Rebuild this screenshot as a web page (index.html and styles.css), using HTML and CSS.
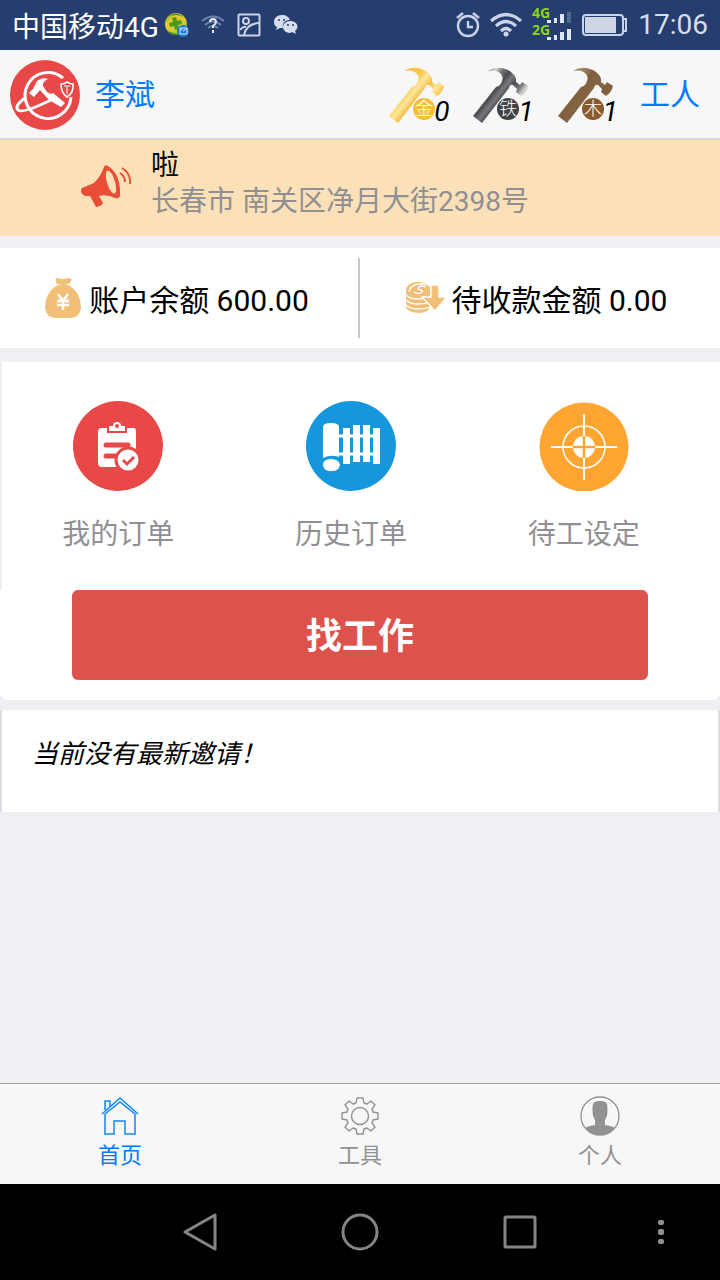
FILE: index.html
```html
<!DOCTYPE html>
<html lang="zh-CN">
<head>
<meta charset="utf-8">
<meta name="viewport" content="width=device-width, initial-scale=1">
<title>首页</title>
<link rel="stylesheet" href="styles.css">
</head>
<body>
<div class="status">
  <div class="status-left">
    <span class="carrier">中国移动4G</span>
    <svg width="28" height="26" viewBox="0 0 28 26"><defs><linearGradient id="ball" x2="1" y2="1"><stop offset="0" stop-color="#58b82c"/><stop offset=".3" stop-color="#e6c931"/><stop offset=".65" stop-color="#d2cb34"/><stop offset="1" stop-color="#2b8a2c"/></linearGradient></defs><circle cx="12" cy="12" r="11" fill="url(#ball)"/><path d="M4 5Q12-2 20 5Q12 1 4 5ZM3 18Q9 25 15 22Q7 21 3 18Z" fill="#348f24"/><path d="M8 6l4-1 1 4 4-1 1 4-4 1 1 4-4 1-1-4-4 1-1-4 4-1z" fill="#4a9a1e"/><circle cx="19" cy="19" r="6" fill="#1979cf"/><path d="M16 16h7v6h-7zM16 16l3.500 3L23 16" fill="none" stroke="#d9ecff"/></svg>
    <svg width="24" height="20" viewBox="0 0 24 20"><g fill="none" stroke="#7083ad" stroke-width="2"><path d="M1 6Q12-3 23 6M4 10Q12 3 20 10M7 13Q12 9 17 13"/></g><path d="M9 7q0-3 3-3t3 3q0 2-3 4v2M12 15v3" fill="none" stroke="#e4eaf6" stroke-width="2"/></svg>
    <svg width="24" height="24" viewBox="0 0 24 24" fill="none" stroke="#c9d4e8" stroke-width="2"><rect x="1.500" y="1.500" width="21" height="21" rx="1"/><circle cx="9" cy="8" r="3"/><path d="M7 22Q9 11 22 10M3 17q3-4 6-3"/></svg>
    <svg width="26" height="22" viewBox="0 0 26 22"><path d="M9 1C4 1 1 4 1 8c0 3 1 4 3 5l-1 3 4-2h3C9 9 12 6 17 6 16 3 13 1 9 1Z" fill="#d5deee"/><path d="M17 7c-4 0-7 3-7 6s3 6 7 6l2-1 4 2-1-3c5-4 2-10-5-10Z" fill="#d5deee"/><g fill="#263d6f"><circle cx="6" cy="6" r="1"/><circle cx="11" cy="6" r="1"/><circle cx="15" cy="11" r="1"/><circle cx="20" cy="11" r="1"/></g></svg>
  </div>
  <div class="status-right">
    <svg width="24" height="26" viewBox="0 0 24 26" fill="none" stroke="#c9d4e8" stroke-width="2.400"><circle cx="12" cy="14" r="10"/><path d="M12 9v6h5M1 6l6-5M23 6l-6-5"/></svg>
    <svg width="32" height="26" viewBox="0 0 32 26"><g fill="none" stroke="#c9d4e8" stroke-width="3.200"><path d="M1 9Q16-4 31 9M6 14Q16 5 26 14M11 19Q16 14 21 19"/></g><circle cx="16" cy="22" r="2.500" fill="#c9d4e8"/></svg>
    <svg width="40" height="46" viewBox="0 -4 40 46"><g class="net"><text x="0" y="12">4G</text><text x="0" y="29">2G</text></g><g fill="#dfe6f2"><rect x="15" y="14" width="4" height="3"/><rect x="22" y="12" width="3" height="5"/><rect x="28" y="8" width="4" height="9"/><rect x="35" y="6" width="4" height="11" fill="#53668f"/><rect x="15" y="31" width="4" height="3"/><rect x="22" y="29" width="3" height="5"/><rect x="28" y="26" width="4" height="8"/><rect x="35" y="23" width="4" height="11"/></g></svg>
    <svg width="46" height="24" viewBox="0 0 46 24"><rect x="1" y="2" width="40" height="20" rx="3" fill="none" stroke="#c9d4e8" stroke-width="2"/><rect x="3" y="4" width="31" height="16" fill="#cdd5e2"/><path d="M42 6h2v12h-2" fill="none" stroke="#c9d4e8" stroke-width="2"/></svg>
    <time class="clock">17:06</time>
  </div>
</div>

<header class="top">
  <svg width="70" height="70" viewBox="0 0 70 70"><circle cx="35" cy="35" r="35" fill="#e84848"/><g fill="none" stroke="#fff" stroke-width="3"><path d="M53 18A23 23 0 1 0 61 37"/><path d="M15 38Q4 46 8 50Q12 54 41 40"/><path d="M51 24q4 0 6-2q3 2 6 2q1 9-6 13q-6-4-6-13Z" stroke-width="1.600" fill="#e84848"/><path d="M54 26h6M57 26v8" stroke-width="1"/></g><path d="M24 37L19 33L23 29L27 21Q32 17 38 19Q32 22 33 26L37 32L41 34L43 33L55 43L51 47L39 40L30 30Z" fill="#fff"/></svg>
  <a class="name" href="#me">李斌</a>
  <div class="medals">
    <div class="medal"><svg width="58" height="58" viewBox="0 0 58 58"><defs><linearGradient id="gold" gradientUnits="userSpaceOnUse" x1="13" y1="8" x2="35" y2="26" spreadMethod="reflect"><stop offset="0" stop-color="#f7bd3d"/><stop offset=".5" stop-color="#f9c64b"/><stop offset=".75" stop-color="#fde79c"/><stop offset="1" stop-color="#f5bd42"/></linearGradient></defs><path d="M16 5Q25-1 36 4Q45 9 44 16L48 19L50 16L56 20Q55 26 49 30L44 26L45 23L41 19Q38 18 37 22L10 57L1 50L24 21L27 20Q33 13 29 8Q25 3 16 5Z" fill="url(#gold)"/><circle cx="36" cy="43" r="11" fill="#f5bd3c"/><text class="metal" x="36" y="49">金</text></svg><em>0</em></div>
    <div class="medal"><svg width="58" height="58" viewBox="0 0 58 58"><defs><linearGradient id="iron" gradientUnits="userSpaceOnUse" x1="20" y1="8" x2="34" y2="19" spreadMethod="reflect"><stop offset="0" stop-color="#d8d8d8"/><stop offset=".3" stop-color="#77797c"/><stop offset=".7" stop-color="#4c4d50"/><stop offset="1" stop-color="#77797c"/></linearGradient></defs><path d="M16 5Q25-1 36 4Q45 9 44 16L48 19L50 16L56 20Q55 26 49 30L44 26L45 23L41 19Q38 18 37 22L10 57L1 50L24 21L27 20Q33 13 29 8Q25 3 16 5Z" fill="url(#iron)"/><circle cx="36" cy="43" r="11" fill="#414347"/><text class="metal" x="36" y="49">铁</text></svg><em>1</em></div>
    <div class="medal"><svg width="58" height="58" viewBox="0 0 58 58"><defs><linearGradient id="wood" gradientUnits="userSpaceOnUse" x1="20" y1="8" x2="38" y2="22" spreadMethod="reflect"><stop offset="0" stop-color="#a98f6d"/><stop offset=".5" stop-color="#80603b"/><stop offset="1" stop-color="#856545"/></linearGradient></defs><path d="M16 5Q25-1 36 4Q45 9 44 16L48 19L50 16L56 20Q55 26 49 30L44 26L45 23L41 19Q38 18 37 22L10 57L1 50L24 21L27 20Q33 13 29 8Q25 3 16 5Z" fill="url(#wood)"/><circle cx="36" cy="43" r="11" fill="#8a5a2c"/><text class="metal" x="36" y="49">木</text></svg><em>1</em></div>
  </div>
  <a class="role" href="#role">工人</a>
</header>

<main class="content">
  <section class="notice">
    <svg width="52" height="44" viewBox="0 0 52 44"><g fill="#e94d35"><path d="M2 24L14 19Q21 12 24 3Q25 0 28 2Q41 10 40 32Q39 35 35 34Q27 30 19 32L23 39Q22 42 16 43L10 32L5 32Q-1 29 2 24Z"/></g><ellipse cx="31" cy="18" rx="4" ry="12" transform="rotate(-17 31 18)" fill="#fce1b8"/><path d="M40 9Q45 12 45 18M42 4Q51 9 50 20" fill="none" stroke="#e94d35" stroke-width="2"/></svg>
    <div>
      <div class="notice-title">啦</div>
      <div class="notice-address">长春市 南关区净月大街2398号</div>
    </div>
  </section>

  <section class="money">
    <div class="money-cell">
      <svg width="36" height="42" viewBox="0 0 36 42"><path d="M12 7Q9 1 12 1L18 2L24 1Q29 1 24 7ZM11 9Q18 5 25 9Q36 16 36 31Q35 41 24 41H12Q1 41 0 31Q0 16 11 9Z" fill="#f2bf79"/><path d="M13 17l5 7 5-7M18 24v9M12 24h12M12 28h12" fill="none" stroke="#fff" stroke-width="2.400"/></svg>
      <span>账户余额 600.00</span>
    </div>
    <div class="money-cell pending">
      <svg width="42" height="34" viewBox="0 0 42 34"><path d="M1 9C1 4 7 1 13 1s12 2 12 6v18c0 4-5 7-11 7S1 29 1 26Z" fill="#f2bf79"/><g fill="none" stroke="#fff" stroke-width="1.300"><path d="M0 13q4 5 12 5t12-2M0 18q4 5 12 5t14-2M0 23q4 5 12 5t14-2M4 11Q5 4 14 3Q21 2 25 5M9 11q5 3 8 0q1-2-2-2q-3-1-1-3q3-2 7 0"/></g><path d="M26 4h8v12h8L30 30L17 16h9z" fill="#f2bf79" stroke="#fff" stroke-width="1.300"/></svg>
      <span>待收款金额 0.00</span>
    </div>
  </section>

  <section class="work">
    <nav class="menu">
      <a href="#orders"><svg width="90" height="90" viewBox="0 0 90 90"><circle cx="45" cy="45" r="45" fill="#e84848"/><path d="M29 27h32q2 0 2 4v31q0 4-4 4H29q-4 0-4-4V31q0-4 4-4Z" fill="#fff"/><path d="M34 25h20v7H34z" fill="#e84848"/><path d="M36 30v-5h4q0-4 4-4t4 4h4v5Z" fill="#fff"/><circle cx="44" cy="25" r="2" fill="#e84848"/><path d="M33 44h22M33 55h14" stroke="#e84848" stroke-width="5" stroke-linecap="round"/><circle cx="55" cy="59" r="12" fill="#fff" stroke="#e84848" stroke-width="3"/><path d="M50 59l4 4 7-7" fill="none" stroke="#e84848" stroke-width="3"/></svg><span>我的订单</span></a>
      <a href="#history"><svg width="90" height="90" viewBox="0 0 90 90"><circle cx="45" cy="45" r="45" fill="#1697dd"/><g fill="#fff"><path d="M17 26Q17 22 25 22T33 26V56Q25 53 17 57ZM17 63Q18 58 25 58Q33 58 34 64Q33 70 26 70H23Q17 69 17 63Z"/><path d="M37 27h7v36h-7zM47 24h7v37h-7zM57 24h7v37h-7zM67 27h7v36h-7z"/></g><path d="M33 35h40M33 53h40" stroke="#fff" stroke-width="3"/></svg><span>历史订单</span></a>
      <a href="#standby"><svg width="90" height="90" viewBox="0 0 90 90"><circle cx="45" cy="46" r="44.500" fill="#ffa632"/><circle cx="45" cy="46" r="21" fill="none" stroke="#fff" stroke-width="1.500"/><circle cx="45" cy="46" r="11" fill="#fff"/><path d="M34 46h22M45 35v22" stroke="#ffa632" stroke-width="2.500"/><path d="M12 46h22M56 46h22M45 13v22M45 57v22" stroke="#fff" stroke-width="2"/></svg><span>待工设定</span></a>
    </nav>
    <button class="find" type="button">找工作</button>
  </section>

  <section class="invite"><em>当前没有最新邀请！</em></section>
</main>

<nav class="tabs">
  <a class="active" href="#home"><svg width="40" height="40" viewBox="0 0 40 40" fill="none" stroke="#1485f5" stroke-width="1.500"><path d="M2 18L20 2L38 18M5 14V5h5v5M5 18V38H14V25H25V38H35V18L20 6Z"/></svg><span>首页</span></a>
  <a href="#tools"><svg width="40" height="40" viewBox="0 0 40 40" fill="none" stroke="#929292" stroke-width="1.400" stroke-linejoin="round"><circle cx="20" cy="20" r="8.500"/><path d="M17 2h6l1 5 3 1 4-3 4 4-3 4 1 3 5 1v6l-5 1-1 3 3 4-4 4-4-3-3 1-1 5h-6l-1-5-3-1-4 3-4-4 3-4-1-3-5-1v-6l5-1 1-3-3-4 4-4 4 3 3-1Z"/></svg><span>工具</span></a>
  <a href="#me"><svg width="40" height="40" viewBox="0 0 40 40"><defs><clipPath id="face"><circle cx="20" cy="20" r="19"/></clipPath></defs><circle cx="20" cy="20" r="19" fill="none" stroke="#929292" stroke-width="1.300"/><path d="M13 8Q14 5 20 5T27 8Q28 14 27 20L25 24V29Q34 30 37 34V40H3V34Q6 30 15 29V24L13 20Q12 13 13 8Z" fill="#929292" clip-path="url(#face)"/></svg><span>个人</span></a>
</nav>

<div class="system">
  <button type="button" aria-label="返回"><svg width="40" height="40" viewBox="0 0 40 40" fill="none" stroke="#858585" stroke-width="3" stroke-linejoin="round"><path d="M35 3V37L5 20Z"/></svg></button>
  <button type="button" aria-label="主屏幕"><svg width="40" height="40" viewBox="0 0 40 40" fill="none" stroke="#858585" stroke-width="3"><circle cx="20" cy="20" r="17"/></svg></button>
  <button type="button" aria-label="最近任务"><svg width="40" height="40" viewBox="0 0 40 40" fill="none" stroke="#858585" stroke-width="3"><rect x="5" y="5" width="30" height="30" rx="1"/></svg></button>
  <button type="button" aria-label="更多"><svg width="40" height="40" viewBox="0 0 40 40" fill="#909090"><rect x="18" y="8" width="6" height="5" rx="2"/><rect x="18" y="17" width="6" height="6" rx="2"/><rect x="18" y="27" width="6" height="5" rx="2"/></svg></button>
</div>
</body>
</html>
```

FILE: styles.css
```css
* { box-sizing: border-box; }
body {
  margin: 0;
  min-height: 100vh;
  display: flex;
  flex-direction: column;
  background: #efeff4;
  color: #000;
  font-family: Roboto, "Noto Sans CJK SC", sans-serif;
  font-size: 28px;
}
a { color: inherit; text-decoration: none; }
button { border: 0; padding: 0; font: inherit; cursor: pointer; }
svg { display: block; flex: none; }

.status {
  display: flex;
  justify-content: space-between;
  height: 50px;
  padding: 0 12px;
  background: #263d6f;
  color: #fff;
}
.status-left, .status-right { display: flex; align-items: center; }
.status-left { gap: 12px; }
.status-left .carrier { margin-right: -7px; }
.status-left .carrier + svg { margin-right: -3px; }
.status-right { gap: 10px; }
.clock { color: #d6deec; line-height: 32px; }
.net { fill: #8fd218; font-size: 14px; font-weight: 700; font-family: "Noto Sans", sans-serif; }

.top {
  display: flex;
  align-items: center;
  height: 90px;
  padding: 2px 20px 0 10px;
  background: #f7f7f7;
  border-bottom: 2px solid #dcdad8;
}
.name, .role { color: #007aff; font-size: 30px; line-height: 40px; }
.name { margin-left: 15px; }
.medals { display: flex; gap: 23px; margin-left: auto; margin-right: 22px; }
.medal { display: flex; align-items: flex-end; }
.medal em { margin-left: -12px; line-height: 24px; }
.metal { fill: #fff; font-size: 18px; font-weight: 300; font-family: "Noto Sans CJK SC", sans-serif; text-anchor: middle; }

.content { flex: 1; }
.notice {
  display: flex;
  align-items: center;
  gap: 19px;
  padding: 8px 80px 16px;
  background: #fce1b8;
  line-height: 36px;
}
.notice svg { margin-top: 4px; }
.notice-address { color: #8f8f94; }

.money {
  display: grid;
  grid-template-columns: 1fr 1fr;
  margin-top: 12px;
  padding: 10px 0;
  background: #fff;
  font-size: 30px;
}
.money-cell {
  display: flex;
  align-items: center;
  justify-content: center;
  gap: 8px;
  height: 80px;
  padding-right: 4px;
  border-right: 2px solid #c8c7cc;
}
.money-cell.pending { gap: 5px; border: 0; padding-right: 8px; }

.work {
  margin-top: 14px;
  padding-bottom: 20px;
  background: #fff;
  border-radius: 0 0 8px 8px;
}
.menu {
  display: grid;
  grid-template-columns: 1fr 1fr 1fr;
  padding: 39px 20px 35px 0;
  border-left: 2px solid #efeff4;
  color: #8f8f94;
}
.menu a { display: flex; flex-direction: column; align-items: center; gap: 24px; line-height: 40px; }
.find {
  display: block;
  width: 80%;
  height: 90px;
  margin: 0 auto;
  padding-bottom: 4px;
  border-radius: 6px;
  background: #dd524d;
  color: #fff;
  font-size: 36px;
  font-weight: 700;
}

.invite {
  margin-top: 10px;
  padding: 24px 30px 38px;
  background: #fff;
  border: solid #dddde0;
  border-width: 0 2px;
  font-size: 26px;
  line-height: 40px;
}

.tabs {
  display: grid;
  grid-template-columns: 1fr 1fr 1fr;
  padding: 12px 0 10px;
  border-top: 1px solid #a0a0a2;
  background: #f7f7f7;
  color: #929292;
  font-size: 22px;
  line-height: 36px;
}
.tabs a { display: flex; flex-direction: column; align-items: center; gap: 2px; }
.tabs .active { color: #007aff; }

.system {
  display: grid;
  grid-template-columns: 4fr 4fr 4fr 3fr;
  height: 96px;
  padding-left: 16.666%;
  background: #000;
}
.system button { display: flex; align-items: center; justify-content: center; background: none; }
```
